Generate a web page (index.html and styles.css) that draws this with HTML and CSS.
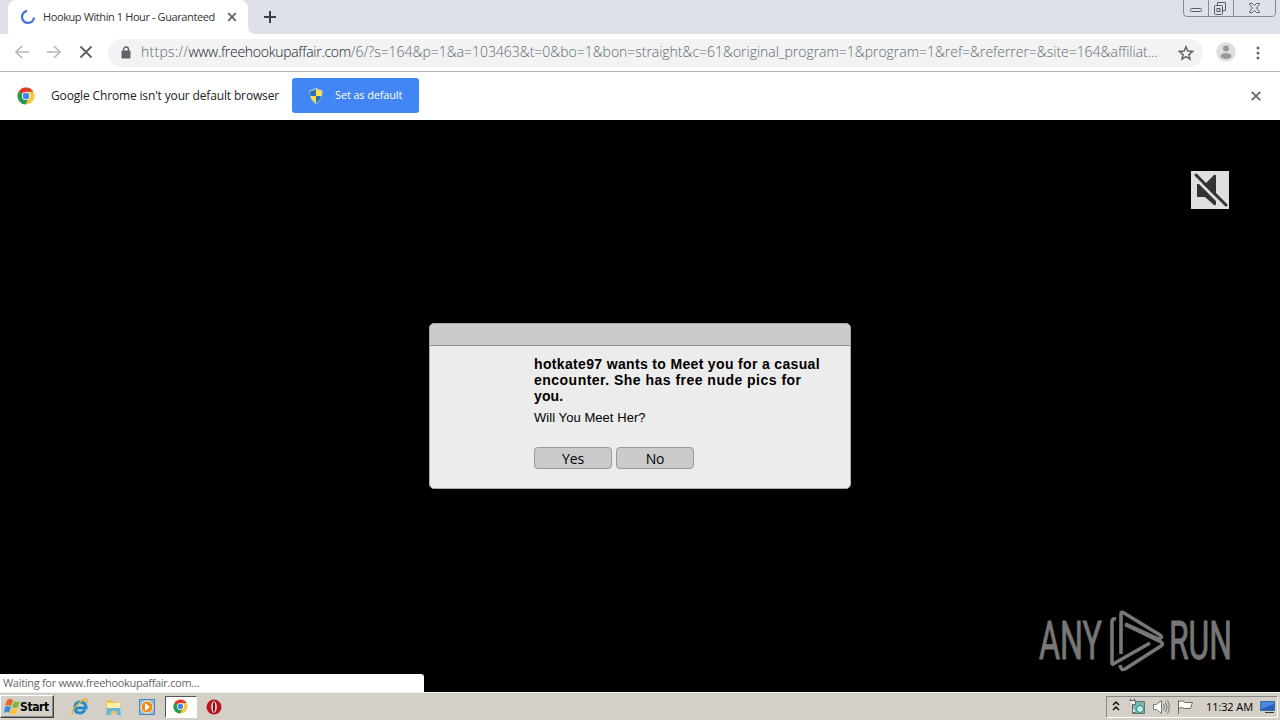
FILE: index.html
```html
<!DOCTYPE html>
<html lang="en">
<head>
<meta charset="utf-8">
<title>Hookup Within 1 Hour - Guaranteed</title>
<link rel="stylesheet" href="styles.css">
</head>
<body>
<svg width="0" height="0" class="defs">
  <symbol id="chrome" viewBox="0 0 18 18">
    <circle cx="9" cy="9" r="8.5" fill="#fbc83a"/>
    <path d="M9 9 1.6 4.8A8.5 8.5 0 0 1 16.4 4.8H9Z" fill="#df3b30"/>
    <path d="M9 9 1.6 4.8A8.5 8.5 0 0 0 8.5 17.5L12 11Z" fill="#279b55"/>
    <circle cx="9" cy="9" r="4.1" fill="#fff"/><circle cx="9" cy="9" r="3.2" fill="#4286ed"/>
  </symbol>
</svg>
<header class="tabs">
  <div class="tab">
    <svg width="16" height="16" viewBox="0 0 16 16"><path d="M7 2A6 6 0 1 0 14 8.5" fill="none" stroke="#3f70d4" stroke-width="2.300"/></svg>
    <span class="tab-title">Hookup Within 1 Hour - Guaranteed</span>
    <svg class="tab-close" width="10" height="10" viewBox="0 0 10 10"><path d="m1.2 1.2 7.6 7.6m0-7.6L1.2 8.8" stroke="#5f6368" stroke-width="1.7"/></svg>
  </div>
  <svg class="tab-foot" width="8" height="8" viewBox="0 0 8 8"><path d="M0 0q0 8 8 8H0z" fill="#fff"/></svg>
  <svg class="plus" width="12" height="12" viewBox="0 0 12 12"><path d="M6 0v12M0 6h12" stroke="#3c4043" stroke-width="2"/></svg>
  <svg class="winctl" width="94" height="18" viewBox="0 0 94 18" fill="none" stroke="#858b96">
    <path d="M.5 0v13q0 3.500 3.500 3.500H88q4.500 0 4.500-3.500V0M25.500 0v16M50.500 0v16"/>
    <g stroke="#555c68"><rect x="7.500" y="8.500" width="11" height="3" rx="1"/><path d="M34.500 5.500V2.500h8v8h-3"/><rect x="31.500" y="5.500" width="8" height="9" rx="1"/><rect x="34" y="8.500" width="3" height="3"/>
    <path d="M66.500 3.500h3l2 2 2-2h3v1l-3 3.500 3 3.500v1h-3l-2-2-2 2h-3v-1l3-3.500-3-3.500z"/></g>
  </svg>
</header>
<nav class="toolbar">
  <svg class="navicons" width="108" height="37" viewBox="0 0 108 37" fill="none" stroke-width="1.7">
    <path d="M29 18H16m6-6-6 6 6 6M47 18h13m-6-6 6 6-6 6" stroke="#b6b8bb"/>
    <path d="m80.500 12.500 11 11m0-11-11 11" stroke="#5f6368" stroke-width="1.900"/>
  </svg>
  <div class="omnibox">
    <svg class="lock" width="10" height="13" viewBox="0 0 10 13"><path d="M2.500 6V3.500a2.500 2.500 0 0 1 5 0V6" fill="none" stroke="#5f6368" stroke-width="1.400"/><rect x=".5" y="4.500" width="9" height="8" rx="1" fill="#5f6368"/></svg>
    <div class="url"><span class="scheme">https://</span><span class="host">www.freehookupaffair.com</span><span class="query">/6/?s=164&amp;p=1&amp;a=103463&amp;t=0&amp;bo=1&amp;bon=straight&amp;c=61&amp;original_program=1&amp;program=1&amp;ref=&amp;referrer=&amp;site=164&amp;affiliat...</span></div>
    <svg class="star" width="16" height="16" viewBox="0 0 16 16"><path d="m8 1.800 1.800 4.300 4.700.4-3.600 3.100 1.100 4.600-4-2.500-4 2.500 1.100-4.600-3.600-3.100 4.700-.4z" fill="none" stroke="#5f6368" stroke-width="1.500"/></svg>
  </div>
  <svg class="avatar" width="20" height="20" viewBox="0 0 20 20"><circle cx="10" cy="10" r="9.800" fill="#dedede"/><circle cx="10" cy="6.500" r="3" fill="#999"/><ellipse cx="10" cy="14" rx="5.500" ry="3" fill="#999"/></svg>
  <svg class="more" width="4" height="14" viewBox="0 0 4 14" fill="#5f6368"><circle cx="2" cy="2" r="1.500"/><circle cx="2" cy="7" r="1.500"/><circle cx="2" cy="12" r="1.500"/></svg>
</nav>
<section class="infobar">
  <svg width="18" height="18"><use href="#chrome"/></svg>
  <span class="info-text">Google Chrome isn't your default browser</span>
  <button class="default-btn">
    <svg width="16" height="16" viewBox="0 0 16 16"><path d="M8 .5Q11 2.500 14 2.500 14.500 11 8 15.500 1.500 11 2 2.500 5 2.500 8 .5Z" fill="#ffe13a" stroke="#c8d2d8"/><path d="M8 1.200V8H2.500Q2 6 2.300 3 5.500 3 8 1.200ZM8 8h5.400Q12.500 12 8 15Z" fill="#2571bb"/></svg>
    <span class="default-label">Set as default</span>
  </button>
  <svg class="info-close" width="10" height="10" viewBox="0 0 10 10"><path d="m.8.8 8.400 8.400m0-8.400L.8 9.200" stroke="#6a6a6a" stroke-width="1.900"/></svg>
</section>
<main class="page">
  <svg class="mute" width="38" height="38" viewBox="0 0 38 38"><path fill="#dfdfdf" d="M0 0h38v38H0z"/><path d="M6 13h8L23 4q2-1 2 1v28q0 2-2 1l-9-8H6z" fill="#333"/><path d="m4 7 30 30" stroke="#dfdfdf" stroke-width="3"/><path d="m5 4 30 30" stroke="#333" stroke-width="3" stroke-linecap="round"/></svg>
  <div class="dialog">
    <div class="dialog-bar"></div>
    <div class="dialog-body">
      <div class="headline"><span class="h1">hotkate97 wants to Meet you for a casual</span><br><span class="h2">encounter. She has free nude pics for</span><br><span class="h3">you.</span></div>
      <div class="question"><span>Will You Meet Her?</span></div>
      <div class="choices"><button class="choice"><span>Yes</span></button><button class="choice"><span>No</span></button></div>
    </div>
  </div>
  <svg class="brand" width="200" height="66" viewBox="0 0 200 66" fill="#777">
    <text x="4" y="51" textLength="63" lengthAdjust="spacingAndGlyphs">ANY</text>
    <text x="134" y="51" textLength="63" lengthAdjust="spacingAndGlyphs">RUN</text>
    <g fill="none" stroke="#777" stroke-width="3.600" stroke-linejoin="round">
      <path d="M86 46V6q0-3 3-1l36 22q3 2 0 3.500-1 .5-3 0L90 16"/>
      <path d="M81 11q-4-1-4 3v41q0 2 2 .5L115 35"/>
      <path d="M85 57q1 6 5 4l36-23q3-2 0-4L91 17"/>
    </g>
  </svg>
  <div class="status"><span>Waiting for www.freehookupaffair.com...</span></div>
</main>
<footer class="taskbar">
  <div class="start">
    <svg width="17" height="17" viewBox="0 0 17 17"><path d="M3 2q3-2 6 0L7 8Q4 6 1 8z" fill="#e96429"/><path d="M10 3q3 2 6 0l-2 6q-3 2-6 0z" fill="#7db83c"/><path d="M1 9q3-2 6 0l-2 6q-2-2-5 0z" fill="#398ed6"/><path d="M8 10q3 2 6 0l-2 6q-3 1-6-1z" fill="#fac632"/></svg>
    <span>Start</span>
  </div>
  <div class="apps">
    <svg width="18" height="18" viewBox="0 0 18 18"><path d="M14 12q-2 3-5 3-5 0-5-5 0-6 5-6 6 0 6 6H5" fill="none" stroke="#218bd0" stroke-width="3"/><path d="M2 16Q-1 15 6 7q8-8 10-5 1 1-1 3" fill="none" stroke="#e6af2d" stroke-width="1.400"/></svg>
    <svg class="folder" width="18" height="18" viewBox="0 0 18 18"><path d="M2 2h6l2 2h6v12H2z" fill="#e8c25c"/><path d="M3 5h13v6H3z" fill="#fff1a9"/><path d="M3 10h13l1 7h-4v-4H7v4H2z" fill="#68b5df"/></svg>
    <svg width="18" height="18" viewBox="0 0 18 18"><path d="M1.500 1.500h15v15h-15z" fill="#8dbce0" stroke="#4a85b6"/><circle cx="9" cy="9" r="6" fill="#f18a1d" stroke="#fff2d8"/><path d="m7 5 5 4-5 4z" fill="#fff"/></svg>
    <div class="active"><svg width="15" height="15"><use href="#chrome"/></svg></div>
    <svg width="18" height="18" viewBox="0 0 18 18"><circle cx="9" cy="9" r="7.500" fill="#b71720"/><ellipse cx="9" cy="9" rx="2.700" ry="5.700" fill="#fff"/><ellipse cx="9" cy="9" rx="1.300" ry="5" fill="#8c1018"/></svg>
  </div>
  <div class="tray">
    <svg width="94" height="22" viewBox="0 0 94 22" fill="none">
      <path d="m6 9 3-3 3 3m-6 5 3-3 3 3" stroke="#111" stroke-width="1.500"/>
      <path d="M25.500 5.500h12v12h-12z" fill="#76b8b0" stroke="#687577"/><circle cx="33" cy="13" r="3.500" fill="#c7eedf" stroke="#24888d"/><path d="M23.500 5V2.500M27.500 5V2.500M22.500 4.500h6v4h-3v8h3" fill="#eee" stroke="#666"/>
      <path d="M46.500 8.500h3l5-4v13l-5-4h-3z" fill="#fff" stroke="#777"/><path d="M56.500 8q2 3 0 6m2-8q3 5 0 10m2-12q3.500 7 0 14" stroke="#777"/>
      <path d="M71.500 18V4.500m0 1q4-2 7 1h7l-2 6h-6q-3-2-6 0" fill="#fff" stroke="#666"/>
    </svg>
    <span class="clock">11:32 AM</span>
    <svg class="screen" width="16" height="14" viewBox="0 0 16 14"><path d="M.5 1.500h14v9H.5z" fill="#2861b9" stroke="#376d9b"/><path d="m1 9 13-5V2H1z" fill="#4c8adf"/><path d="M5 12.500h9" stroke="#333"/></svg>
  </div>
</footer>
</body>
</html>
```
FILE: styles.css
```css
*{box-sizing:border-box}
body{margin:0;width:1280px;height:720px;overflow:hidden;display:flex;flex-direction:column;background:#000;font-family:"Open Sans","Noto Sans",sans-serif;white-space:nowrap;color:#222}
svg{display:block;flex:none}
button{font:inherit;margin:0;padding:0}
.defs{position:absolute}
.tabs{height:34px;flex:none;background:#dee1e8;display:flex;align-items:flex-start;padding-left:8px}
.tab{width:240px;height:34px;background:#fff;border-radius:8px 8px 0 0;display:flex;align-items:center;padding-left:12px}
.tab-title{width:179px;margin-left:7px;padding-bottom:1px;font-size:11px;letter-spacing:-.4px;color:#333}
.tab-close{margin-left:5px}
.tab-foot{align-self:flex-end}
.plus{margin:11px 0 0 8px}
.winctl{margin-left:auto;margin-right:3px}
.toolbar{height:38px;flex:none;background:#fff;border-bottom:1px solid #b5b5b5;display:flex;align-items:center}
.omnibox{width:1095px;height:28px;border-radius:14px;background:#f1f3f4;display:flex;align-items:center;padding-left:13px}
.url{width:1030px;margin-left:10px;padding-bottom:2px;font-size:14px;font-weight:300;color:#65696c;line-height:20px}
.scheme{letter-spacing:.25px}
.host{color:#202124;letter-spacing:-.28px}
.query{letter-spacing:-.03px}
.star{margin-left:7px}
.avatar{margin:0 0 2px 13px}
.more{margin-left:20px}
.infobar{height:48px;flex:none;background:#fff;display:flex;align-items:center;padding-left:17px}
.info-text{width:241px;margin-left:16px;padding-bottom:2px;font-size:12px;letter-spacing:-.15px}
.default-btn{width:127px;height:35px;margin-bottom:1px;background:#4285f4;border:0;border-radius:3px;display:flex;align-items:center;padding-left:16px;color:#fff;font-size:11px;letter-spacing:-.15px}
.default-label{margin-left:11px;padding-bottom:2px}
.info-close{margin-left:auto;margin-right:19px}
.page{height:572px;flex:none;display:flex;flex-direction:column;background:#000}
.mute{margin:51px 51px 114px auto}
.dialog{width:422px;height:166px;margin:0 auto;background:#ececec;border:1px solid #aaa;border-radius:5px;overflow:hidden;flex:none}
.dialog-bar{height:22px;background:#cbcbcb;border-bottom:1px solid #888}
.dialog-body{padding:10px 0 0 104px;color:#000;font-family:"Liberation Sans",Arial,sans-serif}
.headline{font-size:14px;line-height:16px;font-weight:700}
.h1{letter-spacing:.34px}
.h2{letter-spacing:.48px}
.h3{letter-spacing:.1px}
.question{font-size:13px;line-height:16px;margin-top:6px;letter-spacing:.06px}
.choices{display:flex;gap:4px;margin-top:21px}
.choice{width:78px;height:22px;border:1px solid #999;border-radius:4px;background:#cbcbcb;font:14px/22px "Open Sans",sans-serif;letter-spacing:-.2px;color:#000}
.brand{margin:119px 45px 0 auto;overflow:visible;font-family:"Roboto",sans-serif;font-size:53px}
.brand text{stroke:#777;stroke-width:1px}
.status{width:424px;height:18px;background:#fff;border-radius:0 3px 0 0;padding-left:3px;font-size:11px;line-height:18px;letter-spacing:-.3px;color:#666}
.taskbar{height:28px;flex:none;background:#d4d0c8;border-top:1px solid #f2f0ec;display:flex;align-items:center}
.start{width:54px;height:23px;border:1px solid;border-color:#fff #404040 #404040 #fff;box-shadow:inset -1px -1px #888;display:flex;align-items:center;padding-left:3px;font:bold 12px "DejaVu Sans Condensed","DejaVu Sans",sans-serif;color:#000}
.start span{margin-left:-1px;letter-spacing:-.4px}
.apps{display:flex;align-items:center;margin-left:17px;gap:15.500px}
.folder{margin:0 1px 0 -1px}
.active{width:32px;height:22px;margin:0 -7px;background:#fff;border:1px solid;border-color:#555 #fff #fff #555;display:flex;align-items:center;justify-content:center}
.tray{width:172px;height:22px;margin-left:auto;margin-right:2px;border:1px solid;border-color:#888 #fff #fff #888;display:flex;align-items:center;font-size:11px;color:#000}
.clock{width:48px;margin-left:5px;letter-spacing:-.1px}
.screen{margin-left:6px}
```
